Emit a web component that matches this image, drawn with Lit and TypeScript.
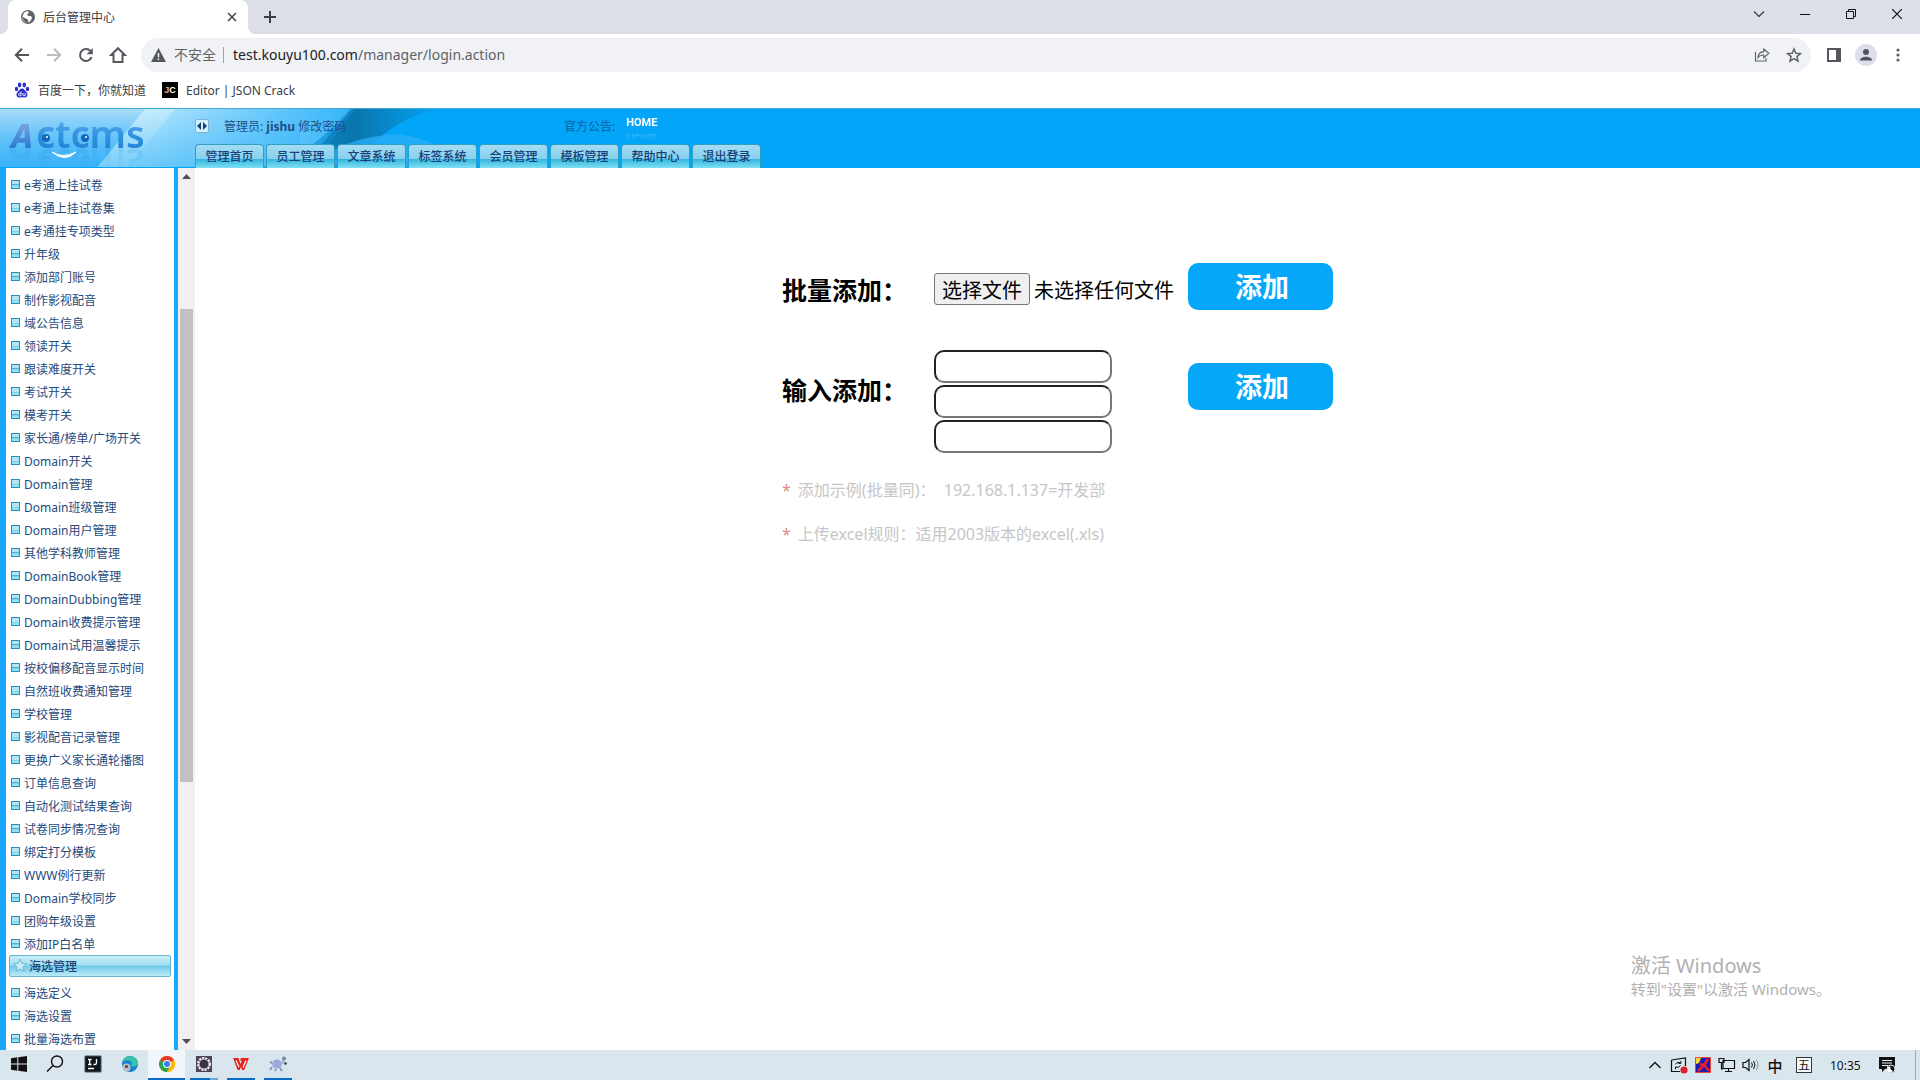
import { LitElement, html, css, svg } from "lit";
import { customElement, state } from "lit/decorators.js";

const shared = css`
  *,
  *::before,
  *::after {
    box-sizing: border-box;
  }
  button {
    font: inherit;
    color: inherit;
    border: 0;
    padding: 0;
    margin: 0;
    background: none;
    display: flex;
    align-items: center;
    justify-content: center;
  }
  a {
    color: inherit;
    text-decoration: none;
  }
  svg {
    display: block;
    flex: none;
  }
`;

@customElement("browser-chrome")
export class BrowserChrome extends LitElement {
  static styles = [
    shared,
    css`
      :host {
        display: block;
        color: #3c4043;
        font-size: 12px;
        background: #fff;
      }
      .tabs {
        display: flex;
        height: 34px;
        background: #dcdfe7;
        padding-left: 8px;
      }
      .tab {
        position: relative;
        display: flex;
        align-items: center;
        gap: 8px;
        width: 240px;
        padding: 0 10px 0 13px;
        background: #fff;
        border-radius: 8px 8px 0 0;
      }
      .tab::before,
      .tab::after {
        content: "";
        position: absolute;
        bottom: 0;
        width: 8px;
        height: 8px;
      }
      .tab::before {
        left: -8px;
        background: radial-gradient(circle at 0 0, #dcdfe7 8px, #fff 8px);
      }
      .tab::after {
        right: -8px;
        background: radial-gradient(circle at 100% 0, #dcdfe7 8px, #fff 8px);
      }
      .title {
        flex: 1;
      }
      .plus {
        width: 28px;
        margin-left: 8px;
      }
      .win {
        display: flex;
        margin-left: auto;
        height: 28px;
      }
      .win button {
        width: 46px;
      }
      .bar {
        display: flex;
        align-items: center;
        height: 38px;
        padding: 4px 6px 0;
      }
      .nav {
        width: 32px;
        height: 32px;
        flex: none;
      }
      .omni {
        flex: 1;
        display: flex;
        align-items: center;
        height: 34px;
        margin: 0 7px;
        padding: 0 1px 0 10px;
        border-radius: 17px;
        background: #f0f2f5;
        font-size: 14px;
        color: #5f6368;
      }
      .insecure {
        display: flex;
        align-items: center;
        gap: 8px;
        padding-right: 7px;
        border-right: 1px solid #9fa3a8;
        line-height: 16px;
      }
      .url {
        flex: 1;
        padding: 0 0 1px 9px;
      }
      .host {
        color: #202124;
      }
      .marks {
        display: flex;
        align-items: center;
        height: 36px;
        padding-left: 14px;
        gap: 16px;
      }
      .marks a {
        display: flex;
        align-items: center;
        gap: 8px;
      }
      .jc {
        width: 16px;
        height: 16px;
        background: #000;
        color: #fff;
        font: bold 9px/16px "Liberation Sans", sans-serif;
        text-align: center;
      }
      .jc b {
        color: #f3b48c;
      }
    `,
  ];

  render() {
    return html`
      <div class="tabs">
        <div class="tab">
          <svg width="14" height="14" viewBox="0 0 14 14">
            <circle cx="7" cy="7" r="7" fill="#5f6368" />
            <path d="M5 1.500c2-.6 3 0 2.600 1.500L6 4.500 7.500 6h2l1.500 1.200-.6 2.300L8 12.500c-1.200-1-.8-2.500-1.300-3.300L4.500 8.500 1.300 6.500A6 6 0 0 0 5.500 12.700L7 13A6 6 0 0 1 1.500 7C2 4 3 2.200 5 1.500z" fill="#fff" />
          </svg>
          <span class="title">后台管理中心</span>
          <button aria-label="关闭标签页">
            <svg width="12" height="12" viewBox="0 0 12 12"><path d="M2 2l8 8M10 2l-8 8" stroke="#45494d" stroke-width="1.600" /></svg>
          </button>
        </div>
        <button class="plus" aria-label="新标签页">
          <svg width="12" height="18" viewBox="0 0 12 18"><path d="M6 3v12M0 9h12" stroke="#3c4043" stroke-width="2" /></svg>
        </button>
        <div class="win">
          <button aria-label="搜索标签页"><svg width="12" height="12" viewBox="0 0 12 12"><path d="M1 3.500l5 5 5-5" fill="none" stroke="#333" stroke-width="1.100" /></svg></button>
          <button aria-label="最小化"><svg width="10" height="10" viewBox="0 0 10 10"><path d="M0 5.500h10" stroke="#111" /></svg></button>
          <button aria-label="还原"><svg width="10" height="10" viewBox="0 0 10 10"><path d="M.5 2.500h7v7h-7zM2.500 2.500v-2h7v7h-2" fill="none" stroke="#111" /></svg></button>
          <button aria-label="关闭"><svg width="10" height="10" viewBox="0 0 10 10"><path d="M0 0l10 10M10 0L0 10" stroke="#111" stroke-width="1.200" /></svg></button>
        </div>
      </div>
      <div class="bar">
        <button class="nav" aria-label="后退"><svg width="16" height="16" viewBox="0 0 16 16"><path d="M15 8H2.500M8 1.800L1.800 8 8 14.200" fill="none" stroke="#54585d" stroke-width="2" /></svg></button>
        <button class="nav" aria-label="前进"><svg width="16" height="16" viewBox="0 0 16 16"><path d="M1 8h12.500M8 1.800L14.200 8 8 14.200" fill="none" stroke="#babcbe" stroke-width="2" /></svg></button>
        <button class="nav" aria-label="重新加载"><svg width="16" height="16" viewBox="0 0 16 16"><path d="M13.600 10.200A6 6 0 1 1 12.400 3.900" fill="none" stroke="#54585d" stroke-width="2" /><path d="M14.800 1v6.200H8.600z" fill="#54585d" /></svg></button>
        <button class="nav" aria-label="主页"><svg width="18" height="18" viewBox="0 0 18 18"><path d="M9 2.200L2.200 9H4.500v7h9V9h2.300z" fill="none" stroke="#54585d" stroke-width="2" /></svg></button>
        <div class="omni">
          <span class="insecure">
            <svg width="15" height="14" viewBox="0 0 15 14"><path d="M7.500 0L15 14H0z" fill="#54585d" /><path d="M7.500 5v4.200M7.500 10.500v1.600" stroke="#f0f2f5" stroke-width="1.500" /></svg>不安全</span>
          <span class="url"><span class="host">test.kouyu100.com</span>/manager/login.action</span>
          <button class="nav" aria-label="分享"><svg width="16" height="16" viewBox="0 0 16 16"><path d="M1.500 5v9h10.500v-3M4 10.500c.3-3.800 2.500-5.700 5.800-5.800V2l5 4.300-5 4.300V8C7 8 5.300 8.700 4 10.500z" fill="none" stroke="#5f6368" stroke-width="1.200" /></svg></button>
          <button class="nav" aria-label="收藏"><svg width="16" height="16" viewBox="0 0 16 16"><path d="M8 2l1.800 4.200 4.600.4-3.500 3 1.100 4.500L8 11.700l-4 2.400 1.100-4.500-3.500-3 4.600-.4z" fill="none" stroke="#5f6368" stroke-width="1.500" /></svg></button>
        </div>
        <button class="nav" aria-label="侧边栏"><svg width="14" height="14" viewBox="0 0 14 14"><path d="M0 0h14v14H0zM2 2v10h7V2z" fill="#54585d" fill-rule="evenodd" /></svg></button>
        <button class="nav" aria-label="用户"><svg width="22" height="22" viewBox="0 0 22 22"><circle cx="11" cy="11" r="11" fill="#dcdfe7" /><circle cx="11" cy="8" r="3" fill="#4a5665" /><path d="M5 16.500c0-5 12-5 12 0z" fill="#4a5665" /></svg></button>
        <button class="nav" aria-label="菜单"><svg width="4" height="14" viewBox="0 0 4 14" fill="#5f6368"><circle cx="2" cy="2" r="1.600" /><circle cx="2" cy="7" r="1.600" /><circle cx="2" cy="12" r="1.600" /></svg></button>
      </div>
      <div class="marks">
        <a href="#">
          <svg width="16" height="16" viewBox="0 0 16 16" fill="#2b2fd0">
            <ellipse cx="5.600" cy="3" rx="1.800" ry="2.400" /><ellipse cx="10.300" cy="3" rx="1.800" ry="2.400" />
            <ellipse cx="2.500" cy="7" rx="1.700" ry="2.200" /><ellipse cx="13.500" cy="7" rx="1.700" ry="2.200" />
            <path d="M8 6.500c2 0 2.800 2 4.300 3.500 2.200 2.200 1.200 5.500-1.300 5.500-1.300 0-2-.3-3-.3s-1.700.3-3 .3c-2.500 0-3.500-3.300-1.300-5.500C5.200 8.500 6 6.500 8 6.500z" />
            <path d="M7 9.500v4.200H5.500c-1.300 0-1.300-2.400 0-2.400H7M9 11v2q0 .7.800.7h1.400V11" fill="none" stroke="#fff" stroke-width=".9" />
          </svg>百度一下，你就知道</a>
        <a href="#"><span class="jc"><b>J</b>C</span>Editor | JSON Crack</a>
      </div>
    `;
  }
}

const TABS = ["管理首页", "员工管理", "文章系统", "标签系统", "会员管理", "模板管理", "帮助中心", "退出登录"];

@customElement("site-header")
export class SiteHeader extends LitElement {
  static styles = [
    shared,
    css`
      :host {
        position: relative;
        display: flex;
        height: 59px;
        background: #03a5f8;
        border-top: 1px solid #45a9d8;
        font-size: 12px;
        color: #1f4f86;
      }
      .art,
      .smile {
        position: absolute;
        left: 0;
        top: 0;
      }
      .logo {
        position: relative;
        width: 195px;
        flex: none;
        clip-path: inset(-20px 0 0 0);
      }
      .logo .mark {
        overflow: visible;
        -webkit-box-reflect: below -17px linear-gradient(transparent 35%, rgba(0, 0, 0, 0.25));
      }
      .right {
        position: relative;
        flex: 1;
        display: flex;
        flex-direction: column;
        justify-content: space-between;
      }
      .info {
        display: flex;
        align-items: center;
        height: 34px;
      }
      .toggle {
        width: 14px;
        height: 14px;
        border: 1px solid #7fb2cf;
        border-radius: 2px;
        background: #d3f1fd;
      }
      .user {
        width: 355px;
        padding-left: 15px;
      }
      .notice {
        color: #0a61a5;
      }
      .home {
        margin-left: 11px;
        padding-bottom: 6px;
        color: #fff;
        font: bold 11px/12px Roboto, "Liberation Sans", sans-serif;
        -webkit-box-reflect: below -10px linear-gradient(transparent 15%, rgba(0, 0, 0, 0.5));
      }
      .menu {
        display: flex;
        gap: 2px;
      }
      .menu a {
        width: 69px;
        height: 24px;
        line-height: 24px;
        text-align: center;
        border: 1px solid #2f9fc6;
        border-bottom: 0;
        border-radius: 4px 4px 0 0;
        background: linear-gradient(#a5dcf3, #86d0ee 60%, #34b5df 62%, #7fe0f3);
        font-weight: 500;
        color: #173f78;
      }
    `,
  ];

  render() {
    return html`
      <svg class="art" width="560" height="58" viewBox="0 0 560 58" aria-hidden="true">
        <defs>
          <linearGradient id="base" x2="0" y2="1"><stop stop-color="#a9ddf9" /><stop offset="1" stop-color="#48b6fa" /></linearGradient>
          <linearGradient id="glow"><stop stop-color="#d4f1fe" /><stop offset=".3" stop-color="#a4e0fd" /><stop offset="1" stop-color="#35b5f9" /></linearGradient>
          <linearGradient id="dark" x1="0" x2="1"><stop stop-color="#0b86c6" /><stop offset=".4" stop-color="#0a76ad" /><stop offset="1" stop-color="#03a5f8" /></linearGradient>
          <linearGradient id="shade" x2="0" y2="1"><stop stop-color="#22a9f5" stop-opacity="0" /><stop offset="1" stop-color="#2bb0f8" stop-opacity=".55" /></linearGradient>
        </defs>
        <path d="M0 0h160v60H0z" fill="url(#base)" />
        <path d="M145 0H352L300 60H96z" fill="url(#glow)" />
        <path d="M175 0h-30L96 60h30z" fill="#d9f3fe" opacity=".5" />
        <path d="M300 60L352 0h88q-50 8-90 60z" fill="url(#dark)" />
        <path d="M275 60q45-25 75-60h5l-45 60z" fill="#0d8bce" opacity=".6" />
        <path d="M315 60q20-32 85-35 50 10 80 35z" fill="#2bb0f8" opacity=".75" />
        <path d="M0 0h300v60H0z" fill="url(#shade)" />
      </svg>
      <a class="logo" href="#" aria-label="Actcms">
        <svg class="mark" width="160" height="48" viewBox="0 0 160 48">
          <defs>
            <linearGradient id="ink" x2="0" y2="1"><stop stop-color="#7ab9ee" /><stop offset=".55" stop-color="#2f93e0" /><stop offset="1" stop-color="#1a78cd" /></linearGradient>
            <linearGradient id="cap" x2="0" y2="1"><stop stop-color="#9db9e8" /><stop offset="1" stop-color="#0a66ca" /></linearGradient>
          </defs>
          <g font-family="Noto Sans, sans-serif" font-weight="600">
            <text x="11" y="39" font-size="34" font-weight="800" font-style="italic" fill="url(#cap)">A</text>
            <text x="36" y="39" font-size="38" fill="url(#ink)">ctcms</text>
          </g>
          <circle cx="46" cy="29" r="4" fill="#1668bd" /><circle cx="47" cy="28" r="1" fill="#fff" />
          <circle cx="85" cy="29" r="4" fill="#1668bd" /><circle cx="86" cy="28" r="1" fill="#fff" />
        </svg>
        <svg class="smile" width="90" height="56" viewBox="0 0 90 56"><path d="M52 43q11 7 24 0-11 11-24 0z" fill="#fff" stroke="#fff" /></svg>
      </a>
      <div class="right">
        <div class="info">
          <button class="toggle" aria-label="收起侧栏"><svg width="12" height="8" viewBox="0 0 12 8"><path d="M5 0v8L1 4zM7 0v8l4-4z" fill="#123f78" /></svg></button>
          <span class="user">管理员: <b>jishu</b> <a href="#">修改密码</a></span>
          <span class="notice">官方公告:</span>
          <a class="home" href="#">HOME</a>
        </div>
        <nav class="menu">${TABS.map((t) => html`<a href="#">${t}</a>`)}</nav>
      </div>
    `;
  }
}

const ITEMS = [
  "e考通上挂试卷", "e考通上挂试卷集", "e考通挂专项类型", "升年级", "添加部门账号", "制作影视配音", "域公告信息",
  "领读开关", "跟读难度开关", "考试开关", "模考开关", "家长通/榜单/广场开关", "Domain开关", "Domain管理",
  "Domain班级管理", "Domain用户管理", "其他学科教师管理", "DomainBook管理", "DomainDubbing管理",
  "Domain收费提示管理", "Domain试用温馨提示", "按校偏移配音显示时间", "自然班收费通知管理", "学校管理",
  "影视配音记录管理", "更换广义家长通轮播图", "订单信息查询", "自动化测试结果查询", "试卷同步情况查询",
  "绑定打分模板", "WWW例行更新", "Domain学校同步", "团购年级设置", "添加IP白名单",
];
const SELECTION_ITEMS = ["海选定义", "海选设置", "批量海选布置"];

@customElement("side-nav")
export class SideNav extends LitElement {
  static styles = [
    shared,
    css`
      :host {
        display: flex;
        min-height: 0;
        flex: none;
        font-size: 12px;
        color: #254a7c;
      }
      nav {
        width: 178px;
        padding: 5px 3px 0;
        border-left: 6px solid #1aa8ff;
        border-right: 4px solid #1aa8ff;
        overflow: hidden;
      }
      ul {
        list-style: none;
        margin: 0;
        padding: 0 0 0 2px;
      }
      li a {
        display: flex;
        align-items: center;
        gap: 4px;
        height: 23px;
        white-space: nowrap;
      }
      li a::before {
        content: "";
        width: 9px;
        height: 9px;
        border: 1px solid #2390b4;
        background: linear-gradient(#b4e5f5 50%, #4fb4d4 50%, #8fe3f4 70%);
      }
      h2 {
        display: flex;
        align-items: center;
        height: 22px;
        margin: 0 0 4px;
        padding-left: 3px;
        border: 1px solid #6cb4cf;
        border-radius: 2px;
        background: linear-gradient(#c9edf9, #a5def2 45%, #6fc9e8 50%, #b9ecf7);
        font-size: 12px;
        font-weight: 500;
        color: #1c4378;
      }
      .scroll {
        width: 17px;
        display: flex;
        flex-direction: column;
        padding: 0 2px;
        background: #f1f1f1;
      }
      .scroll svg {
        margin: 0 auto;
      }
      .before {
        flex: 124;
      }
      .thumb {
        flex: 473;
        background: #c1c1c1;
      }
      .after {
        flex: 251;
      }
    `,
  ];

  private rows(items: string[]) {
    return html`<ul>${items.map((t) => html`<li><a href="#">${t}</a></li>`)}</ul>`;
  }

  render() {
    return html`
      <nav>
        ${this.rows(ITEMS)}
        <h2>
          <svg width="16" height="16" viewBox="0 0 16 16"><path d="M7 1l2 4.300 4.700.4-3.600 3.100 1.100 4.600L7 11l-4.100 2.400L4 8.800.5 5.700 5 5.300z" fill="#c6ecf8" stroke="#6fb5d2" /></svg>
          <span>海选管理</span>
        </h2>
        ${this.rows(SELECTION_ITEMS)}
      </nav>
      <div class="scroll" aria-hidden="true">
        <svg width="9" height="17" viewBox="0 0 9 17"><path d="M0 11h9L4.500 6z" fill="#505050" /></svg>
        <div class="before"></div>
        <div class="thumb"></div>
        <div class="after"></div>
        <svg width="9" height="17" viewBox="0 0 9 17"><path d="M0 6h9l-4.500 5z" fill="#505050" /></svg>
      </div>
    `;
  }
}

@customElement("whitelist-form")
export class WhitelistForm extends LitElement {
  @state() private fileName = "未选择任何文件";

  static styles = [
    shared,
    css`
      :host {
        flex: 1;
        display: flex;
        flex-direction: column;
        align-items: center;
        padding-top: 95px;
        color: #000;
      }
      form {
        display: flex;
        flex-direction: column;
      }
      .row {
        display: grid;
        grid-template-columns: 152px 254px 145px;
        align-items: start;
      }
      .row + .row {
        margin-top: 40px;
      }
      .caption {
        padding-top: 9px;
        font-size: 25px;
        line-height: 36px;
        font-weight: bold;
      }
      .add {
        width: 100%;
        height: 47px;
        padding: 0 0 2px 3px;
        border-radius: 10px;
        background: #06a7f8;
        color: #fff;
        font-size: 27px;
        font-weight: bold;
      }
      .lower {
        margin-top: 13px;
      }
      .file {
        display: flex;
        align-items: center;
        gap: 4px;
        padding-top: 10px;
        font-size: 20px;
        white-space: nowrap;
      }
      .pick {
        height: 32px;
        padding: 0 7px;
        border: 1px solid #767676;
        border-radius: 3px;
        background: #efefef;
      }
      .fields {
        display: flex;
        flex-direction: column;
        align-items: flex-start;
        gap: 2px;
      }
      .fields input {
        width: 178px;
        height: 33px;
        padding: 1px 8px;
        border: 2px inset #767676;
        border-radius: 10px;
        background: #fff;
        font: inherit;
        font-size: 16px;
      }
      .hints {
        margin: 26px 0 0;
        padding: 0;
        list-style: none;
        color: #c6c6c6;
        font-size: 16px;
        line-height: 22px;
      }
      .hints li {
        display: flex;
        gap: 7px;
        margin-bottom: 22px;
        white-space: pre;
      }
      .star {
        color: #e08a8a;
      }
    `,
  ];

  private pick() {
    this.renderRoot.querySelector<HTMLInputElement>("#file")!.click();
  }

  private chosen(e: Event) {
    const f = (e.target as HTMLInputElement).files?.[0];
    this.fileName = f ? f.name : "未选择任何文件";
  }

  render() {
    return html`
      <form @submit=${(e: Event) => e.preventDefault()}>
        <div class="row">
          <label class="caption" for="file">批量添加：</label>
          <div class="file">
            <input id="file" type="file" hidden @change=${this.chosen} />
            <button type="button" class="pick" @click=${this.pick}>选择文件</button>
            <span>${this.fileName}</span>
          </div>
          <button class="add">添加</button>
        </div>
        <div class="row">
          <label class="caption lower" for="entry1">输入添加：</label>
          <div class="fields">
            <input id="entry1" type="text" />
            <input type="text" aria-label="输入添加" />
            <input type="text" aria-label="输入添加" />
          </div>
          <button class="add lower">添加</button>
        </div>
        <ul class="hints">
          <li><span class="star">*</span><span>添加示例(批量同)：  192.168.1.137=开发部</span></li>
          <li><span class="star">*</span><span>上传excel规则：适用2003版本的excel(.xls)</span></li>
        </ul>
      </form>
    `;
  }
}

const APPS = [
  { name: "开始", state: "", art: svg`<path d="M2 4.200L8.300 3.300V9.500H2zM9.300 3.200L18 2v7.500H9.300zM2 10.500h6.300v6.200L2 15.800zM9.300 10.500H18V18l-8.700-1.200z" fill="#111" />` },
  { name: "搜索", state: "", art: svg`<circle cx="11" cy="7.500" r="5.500" fill="none" stroke="#111" stroke-width="1.400" /><path d="M7 11.500L1 17.500" stroke="#111" stroke-width="1.500" />` },
  { name: "IntelliJ IDEA", state: "", art: svg`<path d="M2 2h16v16H2z" fill="#101418" stroke="#36566e" /><path d="M5 5.500h3.500M6.700 5.500v5M5 10.500h3.500M13.500 5v3.800q0 1.700-1.500 1.700H10.500M5 14.500h6" fill="none" stroke="#fff" stroke-width="1.300" />` },
  { name: "Edge", state: "", art: svg`<circle cx="10" cy="10" r="8" fill="#1682d4" /><path d="M2.300 8C4 1 14 0 17.500 6.500c1.500 4-1 6-4.500 6-2 0-2.500-1-1.500-2 1-2-1-4.500-4-4.300-2.500.1-4.500 1-5.200 1.800z" fill="#38c6a6" /><circle cx="6.500" cy="13.500" r="4" fill="#b9bfc6" /><circle cx="6.500" cy="12.500" r="1.600" fill="#5d4334" />` },
  { name: "Chrome", state: "active", art: svg`<circle cx="10" cy="10" r="8" fill="#fbbc05" /><path d="M3.100 6A8 8 0 0 0 10 18l3.500-6z" fill="#2aa44f" /><path d="M10 6h7a8 8 0 0 1-7 12l3.500-6z" fill="#fbbc05" /><path d="M10 10L3.100 6A8 8 0 0 1 17 6z" fill="#e33b2e" /><circle cx="10" cy="10" r="4" fill="#fff" /><circle cx="10" cy="10" r="3" fill="#3b7ded" />` },
  { name: "设置工具", state: "open split", art: svg`<path d="M2 2h16v16H2z" fill="#4c4360" /><circle cx="10" cy="10" r="6" fill="#2a2433" stroke="#f3f3f3" stroke-width="2" stroke-dasharray="2.200 1" /><circle cx="10" cy="10" r="5" fill="#3a3444" stroke="#dcdcdc" />` },
  { name: "WPS", state: "open", art: svg`<path d="M2 4h5.500l2 6 1.200-3H9.500V4H18l-4.800 12h-2L10 13l-1.200 3H6.600z" fill="#e4251b" /><path d="M5 6.500L8 13M12 13.500l3-7" stroke="#fff" stroke-width="1.200" />` },
  { name: "Navicat", state: "open", art: svg`<ellipse cx="9" cy="10" rx="5" ry="4.500" fill="#9cabdb" /><path d="M4 8l-2 1M4 13l-2 3M12 14l2 3M8 15l-1 2" stroke="#7e93c8" stroke-width="2" /><path d="M13 9l2-4 2 2-2 3z" fill="#9db8cc" /><circle cx="16" cy="4.500" r="2" fill="#6d8da3" /><circle cx="17.500" cy="9.500" r="1.300" fill="#2b3b46" />` },
];

@customElement("task-bar")
export class TaskBar extends LitElement {
  static styles = [
    shared,
    css`
      :host {
        display: flex;
        height: 30px;
        flex: none;
        background: #d9e6ee;
        color: #111;
        font-size: 12px;
      }
      .app {
        width: 37px;
        height: 30px;
        border-bottom: 2px solid transparent;
      }
      .active {
        background: #f0f6fa;
        border-bottom-color: #0a6cc4;
      }
      .open {
        width: 28px;
        margin: 0 4px 0 5px;
        border-bottom-color: #0a6cc4;
      }
      .split {
        border-image: linear-gradient(90deg, #0a6cc4 68%, #6fa6d8 68%) 2;
      }
      .tray {
        display: flex;
        align-items: center;
        margin-left: auto;
        padding-right: 4px;
      }
      .tray button {
        width: 24px;
        height: 30px;
      }
      .tray .zh {
        font-size: 15px;
        font-weight: 500;
      }
      .tray .wu {
        width: 16px;
        height: 16px;
        margin: 0 18px 0 9px;
        border: 1px solid #333;
        background: #f3f8fa;
        font-size: 12px;
      }
      .clock {
        width: 34px;
      }
      .tray .note {
        width: 30px;
        margin: 0 13px 0 8px;
      }
      .peek {
        height: 30px;
        border-left: 1px solid #9fb0bb;
      }
    `,
  ];

  render() {
    return html`
      ${APPS.map((a) => html`<button class="app ${a.state}" aria-label=${a.name}><svg width="20" height="20" viewBox="0 0 20 20">${a.art}</svg></button>`)}
      <div class="tray">
        <button aria-label="显示隐藏的图标"><svg width="12" height="8" viewBox="0 0 12 8"><path d="M.5 7L6 1.500 11.500 7" fill="none" stroke="#111" stroke-width="1.300" /></svg></button>
        <button aria-label="会议"><svg width="18" height="18" viewBox="0 0 18 18"><path d="M1.500 4L15.500 2v8M1.500 4v11.500H10" fill="none" stroke="#111" stroke-width="1.200" /><path d="M5.500 8q2.500-3 5-1M10.800 5v2.500H8.500M10.500 9.500q-2 3-4.700 1.500M5.500 13.300v-2.500" fill="none" stroke="#111" /><circle cx="14" cy="14" r="3.600" fill="#dc1f2e" /></svg></button>
        <button aria-label="输入工具"><svg width="16" height="16" viewBox="0 0 16 16"><path d="M.5.5h15v15H.5z" fill="#1b1bb0" stroke="#e0483e" /><path d="M1 1h5L4 6 1 7z" fill="#ffd83a" /><path d="M13 2L9 8l5 6M9 8L3 14M5 7l6 2" fill="none" stroke="#ee1c2a" stroke-width="2.500" /></svg></button>
        <button aria-label="网络"><svg width="18" height="16" viewBox="0 0 18 16"><path d="M5 3.500h11.500v8H5zM10.500 11.500v3M7 14.500h7M1 1.500h5v4H1zM3.500 5.500V12H5" fill="none" stroke="#111" stroke-width="1.200" /></svg></button>
        <button aria-label="音量"><svg width="18" height="16" viewBox="0 0 18 16" fill="none" stroke="#111"><path d="M1 5.500h2.500L7 2.500v11l-3.500-3H1z" stroke-width="1.200" /><path d="M9.500 5.500q1.800 2.500 0 5M11.500 4q3 4 0 8" /><path d="M14 2.500q4 5.500 0 11" stroke="#8b989f" /></svg></button>
        <button class="zh" aria-label="中文输入">中</button>
        <button class="wu" aria-label="五笔">五</button>
        <span class="clock">10:35</span>
        <button class="note" aria-label="通知"><svg width="18" height="18" viewBox="0 0 18 18"><path d="M1 1h16v12H7l-3 3v-3H1z" fill="#111" /><path d="M4 4.500h10M4 7h10M4 9.500h6" stroke="#e8f0f4" stroke-width="1.100" /><circle cx="13" cy="13" r="4" fill="#111" stroke="#d9e6ee" /><path d="M12.500 10.500a3 3 0 0 0 2.500 4.200 3 3 0 1 1-2.500-4.200z" fill="#fff" /></svg></button>
        <span class="peek"></span>
      </div>
    `;
  }
}

@customElement("app-root")
export class AppRoot extends LitElement {
  static styles = css`
    :host {
      position: relative;
      display: flex;
      flex-direction: column;
      height: 100vh;
      overflow: hidden;
      background: #fff;
      font-family: "Noto Sans", "Noto Sans CJK SC", sans-serif;
    }
    main {
      flex: 1;
      display: flex;
      min-height: 0;
    }
    browser-chrome,
    site-header {
      flex: none;
    }
    .activate {
      position: absolute;
      right: 89px;
      bottom: 81px;
      color: #b0b0b0;
      pointer-events: none;
      font-size: 15px;
      line-height: 20px;
    }
    .activate strong {
      display: block;
      font-size: 20px;
      line-height: 26px;
      font-weight: normal;
    }
  `;

  render() {
    return html`
      <browser-chrome></browser-chrome>
      <site-header></site-header>
      <main>
        <side-nav></side-nav>
        <whitelist-form></whitelist-form>
      </main>
      <task-bar></task-bar>
      <div class="activate"><strong>激活 Windows</strong>转到"设置"以激活 Windows。</div>
    `;
  }
}
